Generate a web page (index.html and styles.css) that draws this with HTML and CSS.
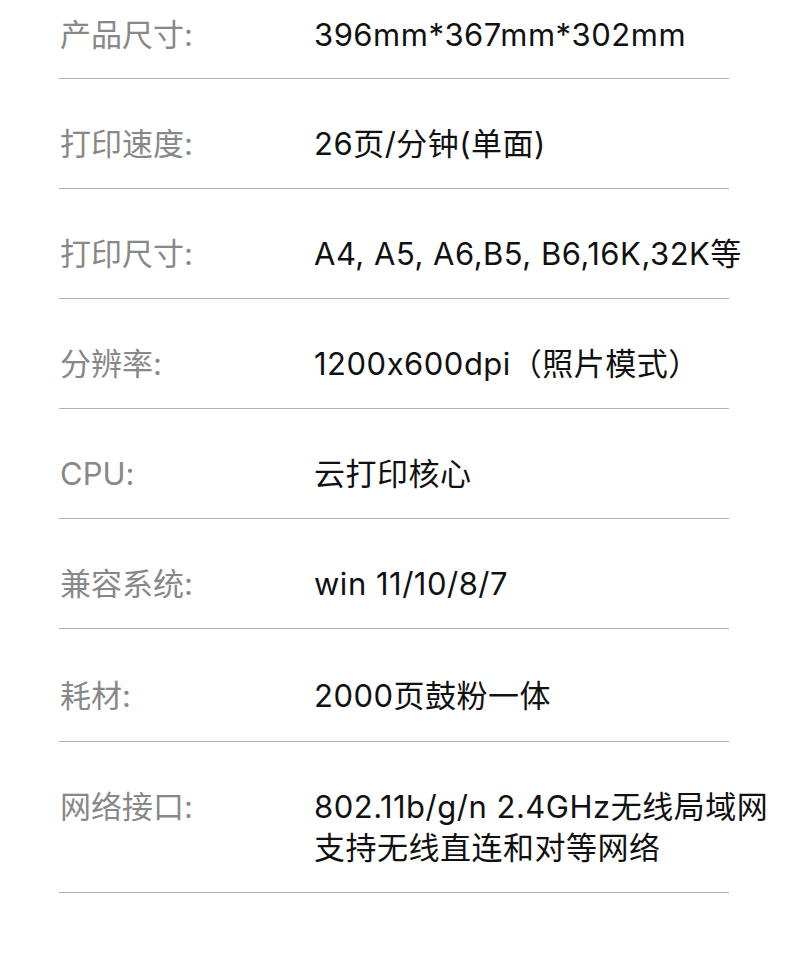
FILE: index.html
```html
<!DOCTYPE html>
<html lang="zh-CN">
<head>
<meta charset="utf-8">
<title>产品参数</title>
<link rel="stylesheet" href="styles.css">
</head>
<body>
<div class="specs">
  <div class="row first"><div class="label">产品尺寸:</div><div class="value">396mm*367mm*302mm</div></div>
  <div class="row"><div class="label">打印速度:</div><div class="value">26页/分钟(单面)</div></div>
  <div class="row"><div class="label">打印尺寸:</div><div class="value">A4, A5, A6,B5, B6,16K,32K等</div></div>
  <div class="row"><div class="label">分辨率:</div><div class="value">1200x600dpi（照片模式）</div></div>
  <div class="row"><div class="label">CPU:</div><div class="value">云打印核心</div></div>
  <div class="row"><div class="label">兼容系统:</div><div class="value">win 11/10/8/7</div></div>
  <div class="row tall"><div class="label">耗材:</div><div class="value">2000页鼓粉一体</div></div>
  <div class="row"><div class="label">网络接口:</div><div class="value">802.11b/g/n 2.4GHz无线局域网<br>支持无线直连和对等网络</div></div>
</div>
</body>
</html>
```

FILE: styles.css
```css
html, body {
  margin: 0;
  padding: 0;
  background: #ffffff;
}

.specs {
  margin-left: 59px;
  width: 670px;
  font-family: Inter, "Noto Sans CJK SC", sans-serif;
  font-size: 31px;
  line-height: 41px;
  font-feature-settings: "calt" 0;
}

.row {
  display: grid;
  grid-template-columns: 255px 1fr;
  padding: 44px 0 24px;
  border-bottom: 1px solid #b2b2b2;
}

.row.first {
  padding-top: 14px;
  padding-bottom: 23px;
}

.row.tall {
  padding-top: 46px;
  padding-bottom: 25px;
}

.label {
  color: #888888;
  padding-left: 1px;
  white-space: nowrap;
}

.value {
  color: #111111;
  letter-spacing: 0.5px;
  white-space: nowrap;
}
```
